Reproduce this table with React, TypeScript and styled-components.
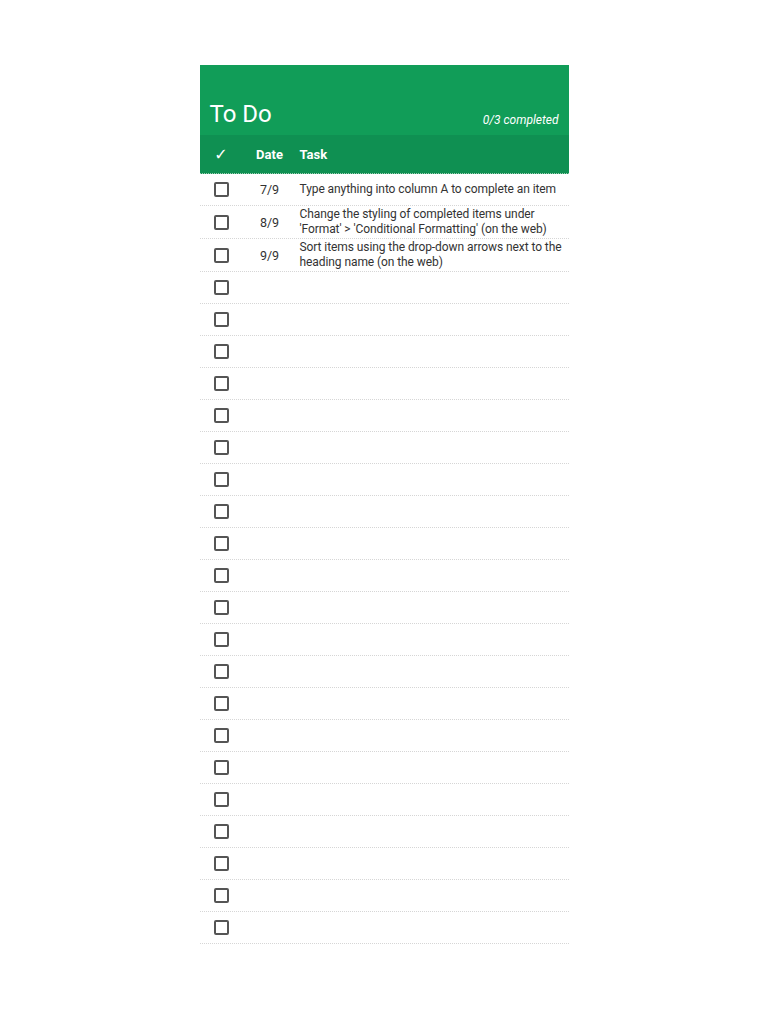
import React from "react";
import styled, { createGlobalStyle } from "styled-components";

const Global = createGlobalStyle`
  html, body { margin: 0; padding: 0; background: #ffffff; }
  body { font-family: Roboto, "Liberation Sans", Arial, sans-serif; }
`;

const Page = styled.div`
  display: flex;
  justify-content: center;
  padding-top: 65px;
`;

const Card = styled.div`
  width: 369px;
  display: flex;
  flex-direction: column;
`;

const Header = styled.div`
  background: #119d58;
  height: 70px;
  display: flex;
  align-items: flex-end;
  justify-content: space-between;
  padding: 0 10px 0 10px;
  box-sizing: border-box;
`;

const Title = styled.div`
  color: #ffffff;
  font-size: 24px;
  font-weight: 400;
  line-height: 24px;
  padding-bottom: 9px;
`;

const Completed = styled.div`
  color: #ffffff;
  font-size: 12px;
  font-style: italic;
  line-height: 14px;
  padding-bottom: 8px;
`;

const Grid = styled.div`
  display: grid;
  grid-template-columns: 43px 54px 1fr;
  align-items: center;
`;

const HeadRow = styled(Grid)`
  background: #0f9052;
  height: 38px;
  color: #ffffff;
  font-size: 13px;
  font-weight: 700;
  border-bottom: 1px dotted #9ccfb4;
`;

const HeadCell = styled.div<{ $center?: boolean; $pad?: number }>`
  text-align: ${(p) => (p.$center ? "center" : "left")};
  padding-left: ${(p) => p.$pad ?? 0}px;
`;

const CheckMark = styled.span`
  font-size: 16px;
  font-weight: 400;
  font-family: "DejaVu Sans", sans-serif;
`;

const Row = styled(Grid)`
  min-height: 32px;
  border-bottom: 1px dotted #d6d6d6;
  box-sizing: border-box;
  color: #333333;
  font-size: 12px;
  letter-spacing: -0.08px;
  line-height: 15px;
`;

const CheckCell = styled.div`
  display: flex;
  justify-content: center;
`;

const Box = styled.div`
  width: 11px;
  height: 11px;
  border: 2px solid #555555;
  border-radius: 2px;
`;

const DateCell = styled.div`
  text-align: center;
  font-size: 12.5px;
`;

const TaskCell = styled.div`
  padding: 1px 4px 1px 3px;
`;

const items = [
  { date: "7/9", task: "Type anything into column A to complete an item" },
  {
    date: "8/9",
    task: "Change the styling of completed items under 'Format' > 'Conditional Formatting' (on the web)",
  },
  {
    date: "9/9",
    task: "Sort items using the drop-down arrows next to the heading name (on the web)",
  },
];

const rows = [...items, ...Array.from({ length: 21 }, () => ({ date: "", task: "" }))];

export default function App() {
  return (
    <>
      <Global />
      <Page>
        <Card>
          <Header>
            <Title>To Do</Title>
            <Completed>0/3 completed</Completed>
          </Header>
          <HeadRow>
            <HeadCell $center>
              <CheckMark>✓</CheckMark>
            </HeadCell>
            <HeadCell $center>Date</HeadCell>
            <HeadCell $pad={3}>Task</HeadCell>
          </HeadRow>
          {rows.map((r, i) => (
            <Row key={i}>
              <CheckCell>
                <Box />
              </CheckCell>
              <DateCell>{r.date}</DateCell>
              <TaskCell>{r.task}</TaskCell>
            </Row>
          ))}
        </Card>
      </Page>
    </>
  );
}
